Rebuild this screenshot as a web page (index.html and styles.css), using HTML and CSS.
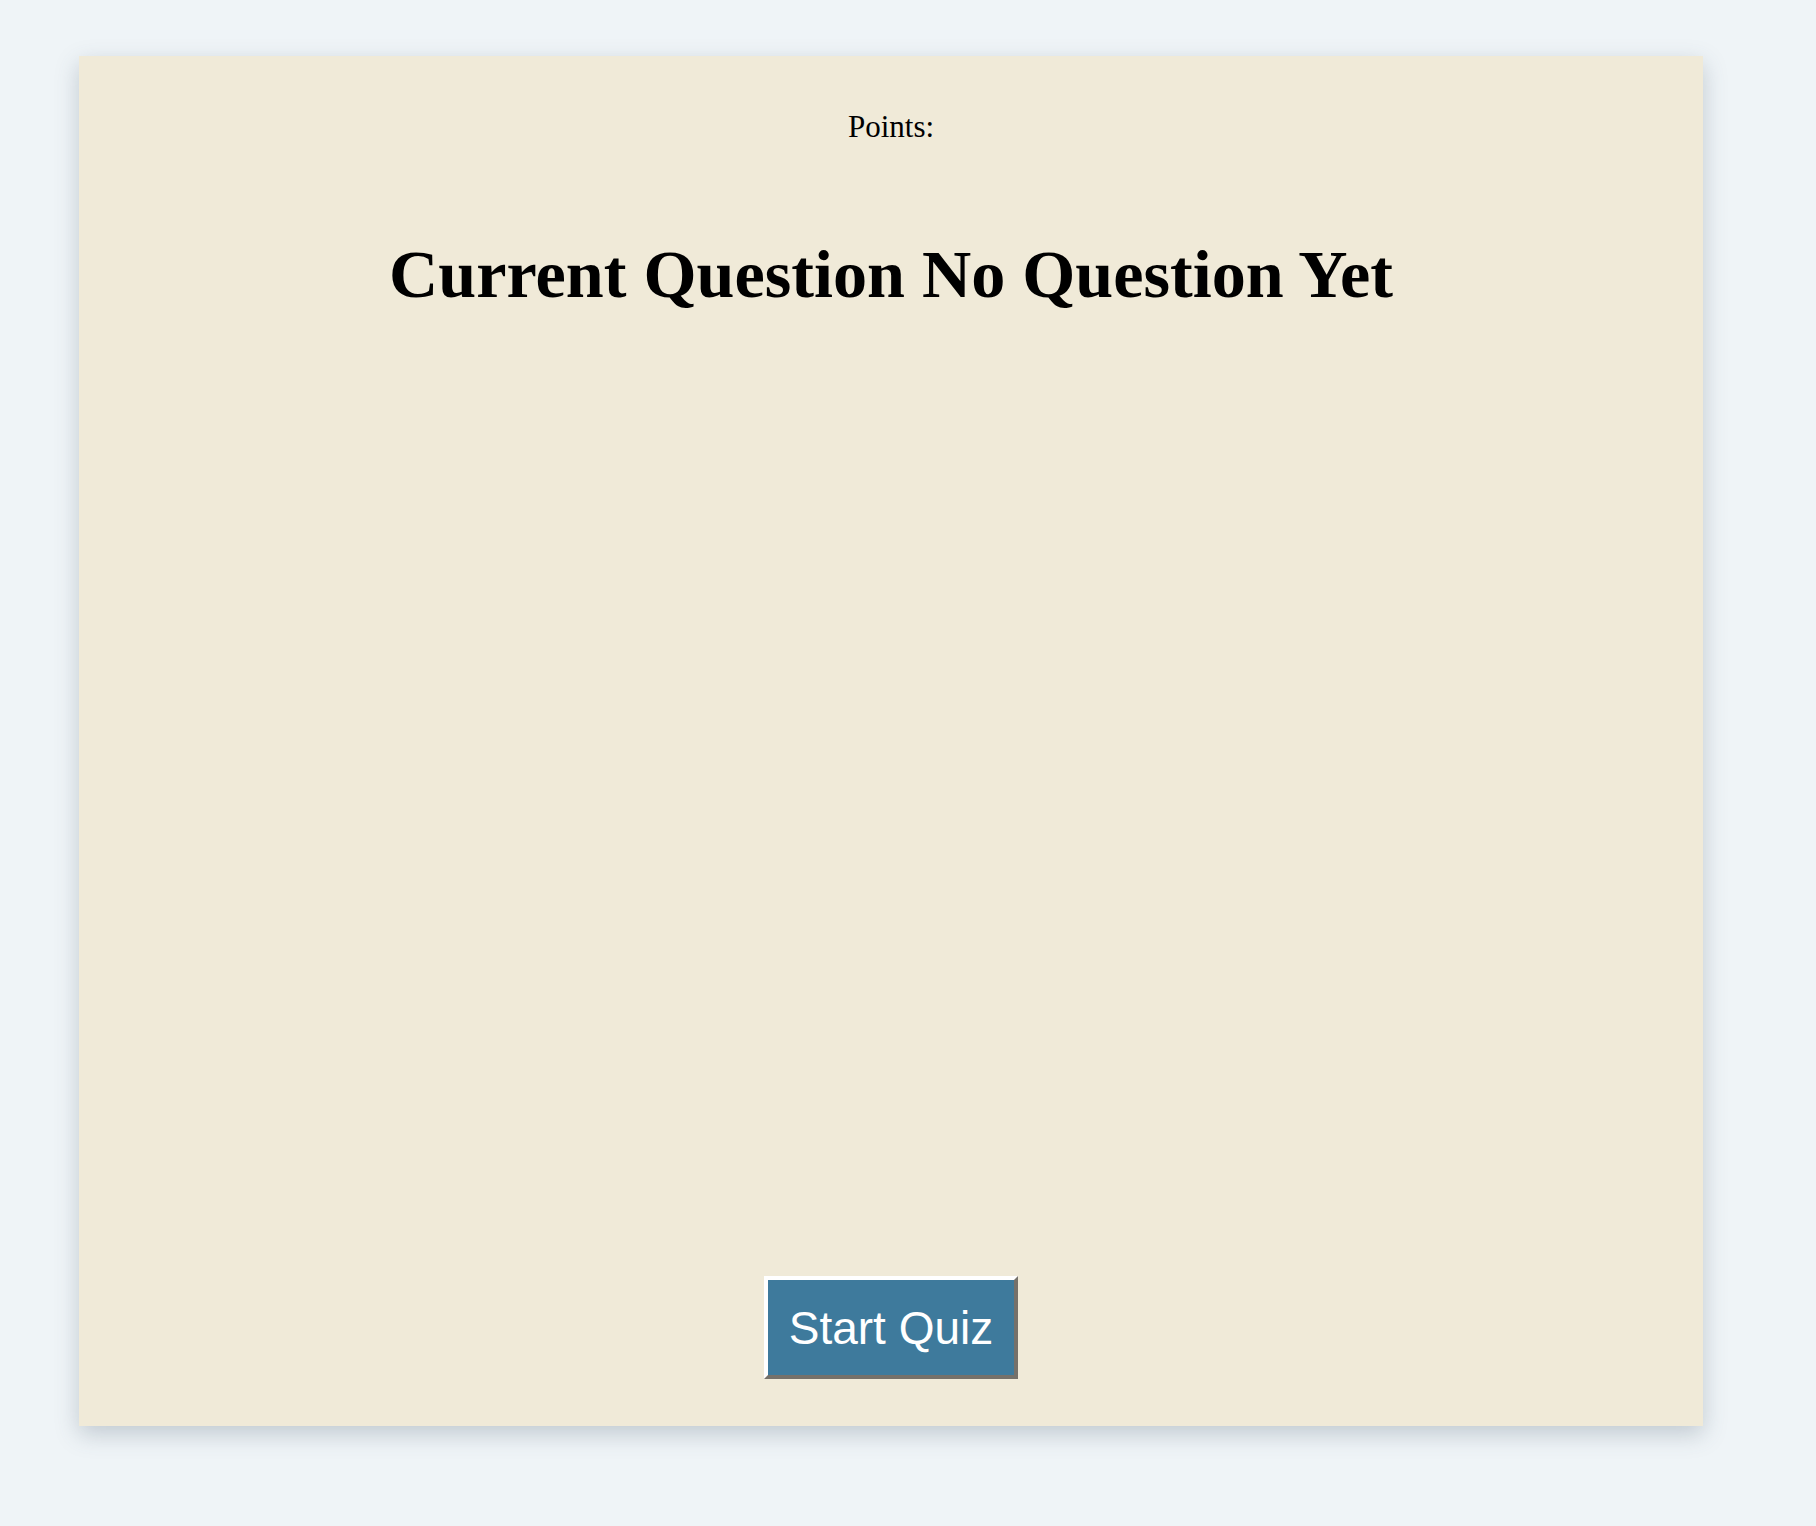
FILE: index.html
```html
<!DOCTYPE html>
<html lang="en">
<head>
<meta charset="utf-8">
<title>Quiz</title>
<link rel="stylesheet" href="styles.css">
</head>
<body>
<main class="card">
  <p class="points">Points:</p>
  <h1 class="question">Current Question No Question Yet</h1>
  <button class="start-btn" type="button">Start Quiz</button>
</main>
</body>
</html>
```

FILE: styles.css
```css
html, body {
  margin: 0;
  padding: 0;
}

body {
  background: #eff4f7;
  font-family: "Liberation Serif", "Times New Roman", serif;
  color: #000;
  padding: 56px 113px 100px 79px;
}

.card {
  box-sizing: border-box;
  height: 1370px;
  background: #f0ead8;
  box-shadow: 0 8px 22px rgba(60, 80, 100, 0.26);
  display: flex;
  flex-direction: column;
  align-items: center;
  padding: 54px 0 47px;
}

.points {
  margin: 0;
  font-size: 31px;
  line-height: 34px;
}

.question {
  margin: 93px 0 0;
  font-size: 68.2px;
  line-height: 75px;
  font-weight: bold;
}

.start-btn {
  margin-top: auto;
  box-sizing: border-box;
  width: 254px;
  height: 103px;
  background: #3e7a9c;
  color: #fff;
  font-family: "Liberation Sans", Arial, sans-serif;
  font-size: 46px;
  border-style: solid;
  border-width: 4px;
  border-color: #ffffff #75716a #75716a #ffffff;
  padding: 0;
}
```
